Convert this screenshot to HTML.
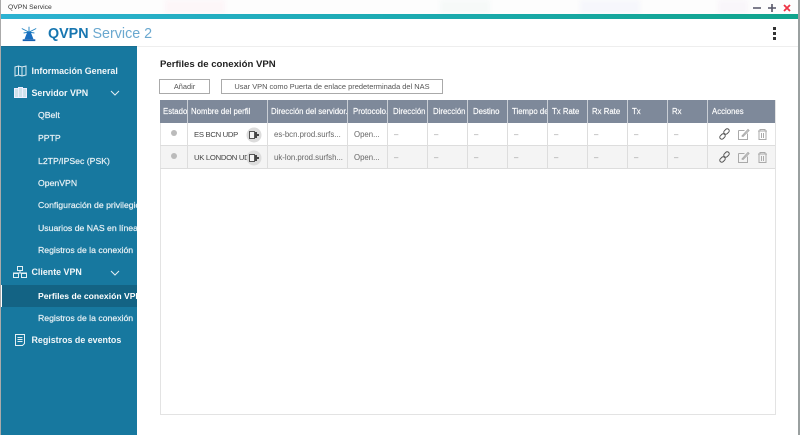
<!DOCTYPE html>
<html><head><meta charset="utf-8"><style>
*{box-sizing:border-box}
html,body{margin:0;padding:0;width:800px;height:435px;overflow:hidden;background:#fff;font-family:"Liberation Sans",sans-serif}
.a{position:absolute;white-space:nowrap}
#side{position:absolute;left:1px;top:47px;width:136px;height:388px;background:#17789f;overflow:hidden}
.m{position:absolute;left:30.500px;color:#f1f6f9;font-size:8.900px;font-weight:bold;line-height:14px;white-space:nowrap}
.s{position:absolute;left:37px;color:#e8f1f5;font-size:8.700px;line-height:12px;white-space:nowrap;-webkit-text-stroke:.2px #e8f1f5}
.h{position:absolute;top:100px;height:23px;background:#7e899a;color:#fff;font-size:7.800px;line-height:23px;padding-left:3px;white-space:nowrap;overflow:hidden;border-right:1px solid #c9ced5;-webkit-text-stroke:.15px #fff}
.c{position:absolute;height:23px;font-size:7.800px;line-height:23px;color:#666;padding-left:6px;white-space:nowrap;overflow:hidden;border-right:1px solid #ddd;border-bottom:1px solid #ddd}
.d{color:#999}
.n{font-size:7.700px;letter-spacing:-.3px;color:#444}
</style></head><body>
<div class="a" style="left:0;top:0;width:800px;height:14px;background:#fdfdfd"></div>
<div class="a" style="left:165px;top:0;width:60px;height:14px;background:#fdf6f8;filter:blur(2px)"></div>
<div class="a" style="left:440px;top:0;width:50px;height:14px;background:#f6f9f8;filter:blur(2px)"></div>
<div class="a" style="left:580px;top:0;width:60px;height:14px;background:#f6f7fc;filter:blur(2px)"></div>
<div class="a" style="left:718px;top:0;width:30px;height:14px;background:#f9f6fa;filter:blur(2px)"></div>
<div class="a" style="left:8px;top:3px;font-size:6.800px;line-height:10px;color:#333">QVPN Service</div>
<div class="a" style="left:0;top:14px;width:800px;height:5px;background:linear-gradient(90deg,#2db2d2,#1cabb2 50%,#10a48c)"></div>
<svg class="a" style="left:750px;top:2px" width="50" height="12"><path d="M3 6h8M18 6h8M22 2v8" stroke="#556" stroke-width="1.600"/><path d="M34 3l6 6M40 3l-6 6" stroke="#ee3344" stroke-width="1.800"/></svg>
<svg class="a" style="left:19px;top:24px" width="20" height="18" viewBox="0 0 22 20"><path d="M11 3v6M3 5l8 4 8-4M5 10l6-1 6 1" stroke="#1c7fc0" stroke-width="1" fill="none"/><path d="M9 9h4l3 8H6z" fill="#1a6fc0"/><rect x="4" y="17" width="14" height="2" fill="#1560b0"/></svg>
<div class="a" style="left:48px;top:24px;font-size:14.300px;line-height:20px;color:#6aa8cf"><b style="color:#1776b0">QVPN</b> Service 2</div>
<div class="a" style="left:773px;top:27px;width:3px;height:3px;background:#333;box-shadow:0 5px #333,0 10px #333"></div>
<div class="a" style="left:137px;top:46px;width:661px;height:1px;background:#eee"></div>
<div class="a" style="left:0;top:46px;width:137px;height:1px;background:#1a6f92"></div>
<div class="a" style="left:798px;top:0;width:2px;height:435px;background:#9aa0a0"></div>
<div class="a" style="left:0;top:0;width:1px;height:435px;background:#aaa"></div>

<div id="side">
<svg class="a" style="left:13px;top:18px" width="13" height="12" fill="none" stroke="#dcebf2"><path d="M1 2l3.500-1 3.500 1 4-1v9l-4 1-3.500-1-3.500 1zM4.500 1v9M8 2v9"/></svg>
<div class="m" style="top:17px">Información General</div>
<svg class="a" style="left:13px;top:40px" width="13" height="12" fill="#cfe2eb" stroke="#eef"><rect x=".5" y="1.500" width="4" height="9"/><rect x="4.500" y=".5" width="4" height="10"/><rect x="8.500" y="1.500" width="4" height="9"/></svg>
<div class="m" style="top:39px">Servidor VPN</div>
<svg class="a" style="left:109px;top:43px" width="10" height="7" fill="none" stroke="#e4eff4"><path d="M1 1l4 4 4-4"/></svg>
<div class="s" style="top:62px">QBelt</div>
<div class="s" style="top:85px">PPTP</div>
<div class="s" style="top:108px">L2TP/IPSec (PSK)</div>
<div class="s" style="top:130px">OpenVPN</div>
<div class="s" style="top:152px">Configuración de privilegios</div>
<div class="s" style="top:175px">Usuarios de NAS en línea</div>
<div class="s" style="top:197px">Registros de la conexión</div>
<svg class="a" style="left:12px;top:219px" width="14" height="12" fill="none" stroke="#e4eff4"><rect x="4.500" y=".5" width="5" height="4"/><rect x=".5" y="7.500" width="5" height="4"/><rect x="8.500" y="7.500" width="5" height="4"/><path d="M7 4.500v3M0 7h14"/></svg>
<div class="m" style="top:218px">Cliente VPN</div>
<svg class="a" style="left:109px;top:223px" width="10" height="7" fill="none" stroke="#e4eff4"><path d="M1 1l4 4 4-4"/></svg>
<div class="a" style="left:0;top:238px;width:136px;height:22px;background:#136384"></div>
<div class="a" style="left:0;top:238px;width:1px;height:22px;background:#fff"></div>
<div class="s" style="top:243px;font-weight:bold;color:#fff;-webkit-text-stroke:0;font-size:8.600px">Perfiles de conexión VPN</div>
<div class="s" style="top:265px">Registros de la conexión</div>
<svg class="a" style="left:13px;top:286px" width="12" height="14" fill="none" stroke="#e4eff4"><path d="M1.500 1.500h9v9l-2 2h-7zM3.500 4.500h5M3.500 6.500h5M3.500 8.500h5"/></svg>
<div class="m" style="top:286px">Registros de eventos</div>
</div>

<div class="a" style="left:160px;top:58px;font-size:9.600px;line-height:13px;font-weight:bold;color:#222">Perfiles de conexión VPN</div>
<div class="a" style="left:159px;top:79px;width:51px;height:15px;border:1px solid #aaa;font-size:7.400px;line-height:14px;text-align:center;color:#555">Añadir</div>
<div class="a" style="left:221px;top:79px;width:222px;height:15px;border:1px solid #aaa;font-size:7.450px;line-height:14px;text-align:center;color:#555">Usar VPN como Puerta de enlace predeterminada del NAS</div>

<div class="a" style="left:160px;top:100px;width:616px;height:315px;border:1px solid #e3e3e3;border-top:0"></div>
<div class="a" style="left:161px;top:146px;width:614px;height:23px;background:#f4f4f4"></div>

<div class="h" style="left:160px;width:28px">Estado</div>
<div class="h" style="left:188px;width:80px">Nombre del perfil</div>
<div class="h" style="left:268px;width:80px">Dirección del servidor...</div>
<div class="h" style="left:348px;width:40px;padding-left:5px">Protocolo...</div>
<div class="h" style="left:388px;width:40px;padding-left:5px">Dirección IP</div>
<div class="h" style="left:428px;width:40px;padding-left:5px">Dirección IP</div>
<div class="h" style="left:468px;width:40px;padding-left:5px">Destino</div>
<div class="h" style="left:508px;width:40px;padding-left:4px">Tiempo de</div>
<div class="h" style="left:548px;width:40px;padding-left:4px">Tx Rate</div>
<div class="h" style="left:588px;width:40px;padding-left:4px">Rx Rate</div>
<div class="h" style="left:628px;width:40px;padding-left:4px">Tx</div>
<div class="h" style="left:668px;width:40px;padding-left:4px">Rx</div>
<div class="h" style="left:708px;width:67px;padding-left:4px;border-right:0">Acciones</div>

<div class="c" style="left:160px;top:123px;width:28px"></div>
<div class="c n" style="left:188px;top:123px;width:80px">ES BCN UDP</div>
<div class="c" style="left:268px;top:123px;width:80px">es-bcn.prod.surfs...</div>
<div class="c" style="left:348px;top:123px;width:40px">Open...</div>
<div class="c d" style="left:388px;top:123px;width:40px">–</div>
<div class="c d" style="left:428px;top:123px;width:40px">–</div>
<div class="c d" style="left:468px;top:123px;width:40px">–</div>
<div class="c d" style="left:508px;top:123px;width:40px">–</div>
<div class="c d" style="left:548px;top:123px;width:40px">–</div>
<div class="c d" style="left:588px;top:123px;width:40px">–</div>
<div class="c d" style="left:628px;top:123px;width:40px">–</div>
<div class="c d" style="left:668px;top:123px;width:40px">–</div>
<div class="c" style="left:708px;top:123px;width:67px;border-right:0"></div>

<div class="c" style="left:160px;top:146px;width:28px"></div>
<div class="c n" style="left:188px;top:146px;width:80px">UK LONDON UD</div>
<div class="c" style="left:268px;top:146px;width:80px">uk-lon.prod.surfsh...</div>
<div class="c" style="left:348px;top:146px;width:40px">Open...</div>
<div class="c d" style="left:388px;top:146px;width:40px">–</div>
<div class="c d" style="left:428px;top:146px;width:40px">–</div>
<div class="c d" style="left:468px;top:146px;width:40px">–</div>
<div class="c d" style="left:508px;top:146px;width:40px">–</div>
<div class="c d" style="left:548px;top:146px;width:40px">–</div>
<div class="c d" style="left:588px;top:146px;width:40px">–</div>
<div class="c d" style="left:628px;top:146px;width:40px">–</div>
<div class="c d" style="left:668px;top:146px;width:40px">–</div>
<div class="c" style="left:708px;top:146px;width:67px;border-right:0"></div>

<div class="a" style="left:171px;top:130px;width:6px;height:6px;border-radius:50%;background:#bbb"></div>
<div class="a" style="left:171px;top:153px;width:6px;height:6px;border-radius:50%;background:#bbb"></div>

<svg class="a" style="left:246px;top:127px" width="16" height="16"><circle cx="8" cy="8" r="7.500" fill="#dcdcdc"/><rect x="3.500" y="4.500" width="5" height="7" fill="#f3f3f3" stroke="#555"/><rect x="9" y="5" width="2" height="6" fill="#444"/><rect x="11" y="7" width="2" height="2" fill="#444"/></svg>
<svg class="a" style="left:246px;top:150px" width="16" height="16"><circle cx="8" cy="8" r="7.500" fill="#dcdcdc"/><rect x="3.500" y="4.500" width="5" height="7" fill="#f3f3f3" stroke="#555"/><rect x="9" y="5" width="2" height="6" fill="#444"/><rect x="11" y="7" width="2" height="2" fill="#444"/></svg>

<svg class="a" style="left:718px;top:127px" width="50" height="14" fill="none"><g stroke="#555"><rect x="1.500" y="7.500" width="6" height="4" rx="2" transform="rotate(-45 4.500 9.500)"/><rect x="5.500" y="2.500" width="6" height="4" rx="2" transform="rotate(-45 8.500 4.500)"/></g><g stroke="#aaa"><path d="M20.500 3.500h6M20.500 3.500v9h9v-6M24 9l6-6.500 1 1-6 6z"/><path d="M40 4h9M42 4v-1.500h5V4M41 4.500v8h7v-8M43.500 6v5M45.500 6v5"/></g></svg>
<svg class="a" style="left:718px;top:150px" width="50" height="14" fill="none"><g stroke="#555"><rect x="1.500" y="7.500" width="6" height="4" rx="2" transform="rotate(-45 4.500 9.500)"/><rect x="5.500" y="2.500" width="6" height="4" rx="2" transform="rotate(-45 8.500 4.500)"/></g><g stroke="#aaa"><path d="M20.500 3.500h6M20.500 3.500v9h9v-6M24 9l6-6.500 1 1-6 6z"/><path d="M40 4h9M42 4v-1.500h5V4M41 4.500v8h7v-8M43.500 6v5M45.500 6v5"/></g></svg>
</body></html>
